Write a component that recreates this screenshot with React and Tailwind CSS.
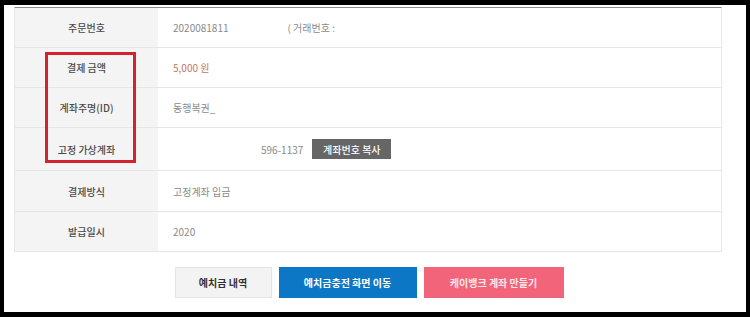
import React from 'react';

const font = { fontFamily: '"Noto Sans CJK KR", "Noto Sans", sans-serif' };

function Row({ label, h, children }) {
    return (
        <div className={`flex border-b border-[#e6e6e6] ${h}`}>
            <div className="w-[143px] shrink-0 bg-[#f4f4f4] flex items-center justify-center text-[10px] text-[#4a4a4a] font-medium">
                {label}
            </div>
            <div className="flex-1 flex items-center pl-[15px] text-[10px] text-[#8a8a8a]">
                {children}
            </div>
        </div>
    );
}

export default function App() {
    return (
        <div className="w-[750px] h-[317px] bg-black px-[4px] py-[5px]" style={font}>
            <div className="relative h-full bg-white pt-[2px] pl-[10px]">
                <div className="w-[708px]">
                    <div className="border-t border-t-[#8c8c8c] border-x border-x-[#e8e8e8]">
                        <Row label="주문번호" h="h-[40px]">
                            <span>2020081811</span>
                            <span className="ml-[59px]">( 거래번호 :</span>
                        </Row>
                        <Row label="결제 금액" h="h-[40px]">
                            <span className="text-[#c27657]">5,000 원</span>
                        </Row>
                        <Row label="계좌주명(ID)" h="h-[40px]">
                            <span>동행복권_</span>
                        </Row>
                        <Row label="고정 가상계좌" h="h-[43px]">
                            <span className="ml-[88px]">596-1137</span>
                            <button className="ml-[9px] h-[20px] w-[79px] bg-[#666666] text-white text-[10px] font-medium">
                                계좌번호 복사
                            </button>
                        </Row>
                        <Row label="결제방식" h="h-[41px]">
                            <span>고정계좌 입금</span>
                        </Row>
                        <Row label="발급일시" h="h-[40px]">
                            <span>2020</span>
                        </Row>
                    </div>

                    <div className="mt-[15px] flex justify-center gap-[7px] pl-[2px]">
                        <button className="w-[97px] h-[31px] bg-[#f3f3f3] border border-[#e4e4e4] text-[10px] font-bold text-[#333]">
                            예치금 내역
                        </button>
                        <button className="w-[138px] h-[31px] bg-[#0c77c5] text-[10px] font-bold text-white">
                            예치금충전 화면 이동
                        </button>
                        <button className="w-[140px] h-[31px] bg-[#f2647a] text-[10px] font-bold text-[#ffe8ec]">
                            케이뱅크 계좌 만들기
                        </button>
                    </div>
                </div>

                {/* annotation box */}
                <div className="absolute left-[41px] top-[47px] w-[91px] h-[111px] border-[3px] border-[#d2232f]" />
            </div>
        </div>
    );
}
